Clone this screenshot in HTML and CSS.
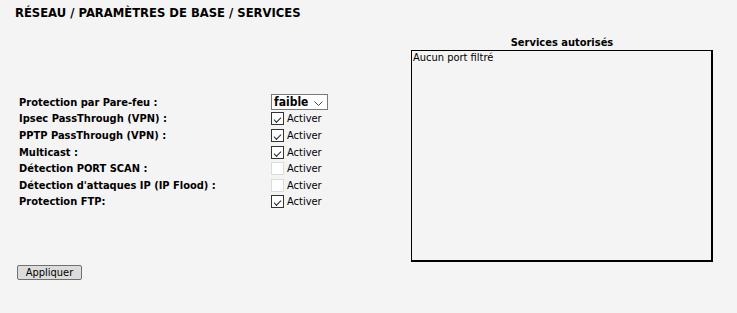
FILE: index.html
```html
<!DOCTYPE html>
<html lang="fr">
<head>
<meta charset="utf-8">
<link rel="stylesheet" href="styles.css">
</head>
<body>
<h1 class="title">RÉSEAU / PARAMÈTRES DE BASE / SERVICES</h1>
<div class="main">
  <div class="left">
    <div class="form">
      <div class="label">Protection par Pare-feu :</div>
      <div class="value"><span class="select">faible<svg class="chev" width="9" height="6" viewBox="0 0 9 6"><path d="M0.5 0.5 L4.5 4.5 L8.5 0.5" fill="none" stroke="#444" stroke-width="1"/></svg></span></div>
      <div class="label">Ipsec PassThrough (VPN) :</div>
      <div class="value"><span class="cb on"></span><span class="act">Activer</span></div>
      <div class="label">PPTP PassThrough (VPN) :</div>
      <div class="value"><span class="cb on"></span><span class="act">Activer</span></div>
      <div class="label">Multicast :</div>
      <div class="value"><span class="cb on"></span><span class="act">Activer</span></div>
      <div class="label">Détection PORT SCAN :</div>
      <div class="value"><span class="cb"></span><span class="act">Activer</span></div>
      <div class="label">Détection d'attaques IP (IP Flood) :</div>
      <div class="value"><span class="cb"></span><span class="act">Activer</span></div>
      <div class="label">Protection FTP:</div>
      <div class="value"><span class="cb on"></span><span class="act">Activer</span></div>
    </div>
    <button class="btn">Appliquer</button>
  </div>
  <div class="right">
    <div class="rtitle">Services autorisés</div>
    <div class="box">Aucun port filtré</div>
  </div>
</div>
</body>
</html>
```
FILE: styles.css
```css
html, body {
  margin: 0;
  background: #f4f4f4;
}
body {
  font-family: "DejaVu Sans", Verdana, sans-serif;
  font-size: 11px;
  color: #000;
}
.title {
  margin: 0;
  padding: 6px 0 0 15px;
  font-size: 11.6px;
  font-weight: bold;
  line-height: 14px;
}
.main {
  display: flex;
  padding-top: 16px;
}
.left {
  width: 411px;
  padding-top: 58px;
  display: flex;
  flex-direction: column;
}
.form {
  display: grid;
  grid-template-columns: 252px auto;
  grid-auto-rows: 16.6px;
  padding-left: 19px;
  align-items: center;
}
.label {
  font-family: "DejaVu Sans Condensed", "DejaVu Sans", sans-serif;
  font-weight: bold;
  font-size: 11px;
}
.value {
  display: flex;
  align-items: center;
  font-family: "DejaVu Sans Condensed", "DejaVu Sans", sans-serif;
}
.select {
  display: inline-flex;
  align-items: center;
  justify-content: space-between;
  width: 57px;
  height: 16px;
  box-sizing: border-box;
  border: 1px solid #7a7a7a;
  background: #fff;
  padding: 0 4px 0 2px;
  font-weight: bold;
  font-size: 12px;
}
.chev { margin-top: 3px; }
.cb {
  width: 13px;
  height: 13px;
  box-sizing: border-box;
  border: 1px solid #dcdcdc;
  background: #fff;
  position: relative;
}
.cb.on {
  border-color: #333;
}
.cb.on::after {
  content: "";
  position: absolute;
  left: 2px;
  top: 0px;
  width: 6px;
  height: 3px;
  border-left: 1px solid #222;
  border-bottom: 1px solid #222;
  transform: translate(0, 4px) rotate(-45deg);
}
.act {
  margin-left: 3px;
  font-size: 11px;
}
.btn {
  align-self: flex-start;
  margin: 55px 0 0 17px;
  width: 65px;
  height: 15px;
  padding: 0;
  border: 1px solid #707070;
  border-radius: 2px;
  background: #dcdcdc;
  font-family: "DejaVu Sans Condensed", "DejaVu Sans", sans-serif;
  font-size: 11px;
  line-height: 13px;
  color: #000;
}
.right {
  width: 302px;
  display: flex;
  flex-direction: column;
}
.rtitle {
  text-align: center;
  font-family: "DejaVu Sans Condensed", "DejaVu Sans", sans-serif;
  font-weight: bold;
  font-size: 11px;
  line-height: 14px;
}
.box {
  height: 212px;
  box-sizing: border-box;
  border: 1px solid #000;
  border-width: 1px 2px 2px 1px;
  padding: 0 1px;
  font-family: "DejaVu Sans Condensed", "DejaVu Sans", sans-serif;
  font-size: 11px;
  line-height: 14px;
}
```
